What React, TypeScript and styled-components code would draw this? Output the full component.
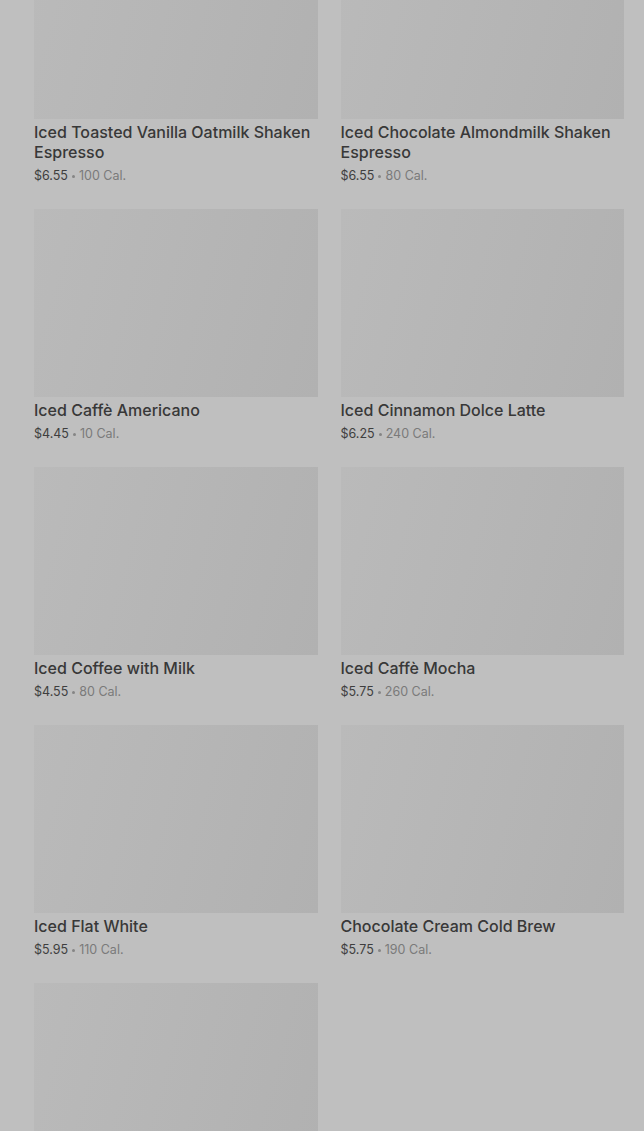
import styled, { createGlobalStyle } from 'styled-components';

type Drink = {
  name: string;
  price: string;
  calories: number;
};

const drinks: Drink[] = [
  { name: 'Iced Toasted Vanilla Oatmilk Shaken Espresso', price: '$6.55', calories: 100 },
  { name: 'Iced Chocolate Almondmilk Shaken Espresso', price: '$6.55', calories: 80 },
  { name: 'Iced Caffè Americano', price: '$4.45', calories: 10 },
  { name: 'Iced Cinnamon Dolce Latte', price: '$6.25', calories: 240 },
  { name: 'Iced Coffee with Milk', price: '$4.55', calories: 80 },
  { name: 'Iced Caffè Mocha', price: '$5.75', calories: 260 },
  { name: 'Iced Flat White', price: '$5.95', calories: 110 },
  { name: 'Chocolate Cream Cold Brew', price: '$5.75', calories: 190 },
];

const GlobalStyle = createGlobalStyle`
  html, body {
    margin: 0;
    padding: 0;
    height: 100%;
    overflow: hidden;
    background: #bfbfbf;
  }

  body {
    font-family: Inter, 'Noto Sans', sans-serif;
    -webkit-font-smoothing: antialiased;
  }
`;

const Page = styled.main`
  height: 1131px;
  overflow: hidden;
  background: #bfbfbf;
`;

// the list is scrolled down a bit, so the first row starts above the fold
const Grid = styled.ul`
  list-style: none;
  margin: -69px 0 0;
  padding: 0 20px 0 34px;
  display: grid;
  grid-template-columns: 1fr 1fr;
  column-gap: 23px;
  row-gap: 24px;
`;

const Card = styled.li`
  display: flex;
  flex-direction: column;
  min-width: 0;
`;

const Thumb = styled.div`
  height: 188px;
  background: linear-gradient(105deg, #bababa 0%, #b6b6b6 45%, #b1b1b1 100%);
`;

const Title = styled.h3`
  margin: 3px 0 0;
  font-size: 16px;
  line-height: 20px;
  font-weight: 500;
  color: #383838;
`;

const Meta = styled.p`
  margin: 5px 0 0;
  display: flex;
  align-items: baseline;
  height: 18px;
  font-size: 12.5px;
  line-height: 18px;
  color: #3e3e3e;
`;

const Calories = styled.span`
  color: #7a7a7a;
`;

const Dot = styled.span`
  align-self: center;
  width: 3px;
  height: 3px;
  margin: 1px 4px 0;
  border-radius: 50%;
  background: #858585;
`;

const App = () => {
  return (
    <Page>
      <GlobalStyle />
      <Grid>
        {drinks.map((drink) => (
          <Card key={drink.name}>
            <Thumb />
            <Title>{drink.name}</Title>
            <Meta>
              {drink.price}
              <Dot />
              <Calories>{drink.calories} Cal.</Calories>
            </Meta>
          </Card>
        ))}
        {/* next item, still loading below the fold */}
        <Card>
          <Thumb />
        </Card>
      </Grid>
    </Page>
  );
};

export default App;
